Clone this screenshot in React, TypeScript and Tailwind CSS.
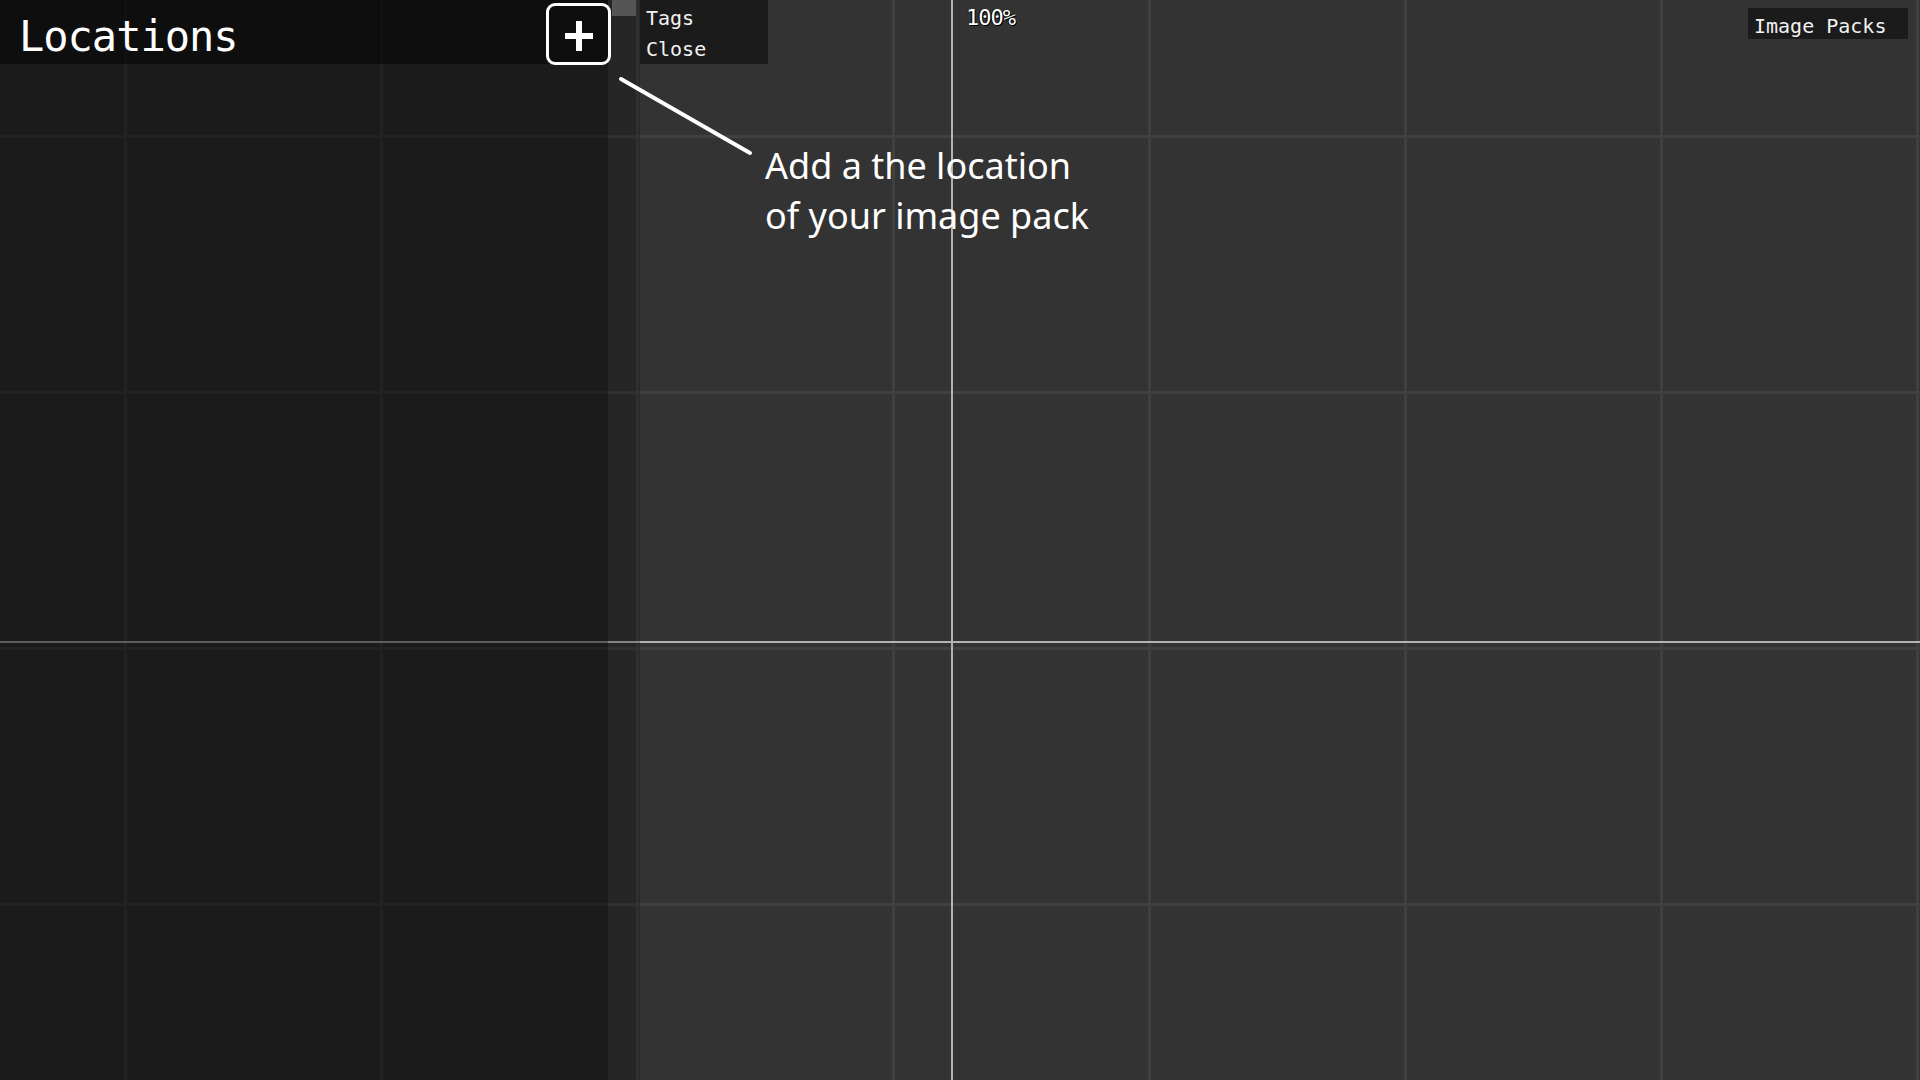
export default function App() {
  const menuItems = ["Tags", "Close"];

  return (
    <div className="relative flex h-[1080px] w-[1920px] overflow-hidden bg-[#333333] [background-image:linear-gradient(to_right,transparent_951px,#b2b2b2_951px,#b2b2b2_953px,transparent_953px),linear-gradient(to_bottom,transparent_641px,#b2b2b2_641px,#b2b2b2_643px,transparent_643px),linear-gradient(to_right,#404040_3px,transparent_3px),linear-gradient(to_bottom,#404040_3px,transparent_3px)] [background-size:100%_100%,100%_100%,256px_256px,256px_256px] [background-position:0_0,0_0,124px_135px,124px_135px] [background-repeat:no-repeat,no-repeat,repeat,repeat]">
      {/* locations panel */}
      <aside className="flex w-[608px] flex-col bg-black/[0.47]">
        <header className="flex h-[64px] items-start bg-black/[0.48]">
          <h1 className="mt-[16px] pl-[19px] font-['DejaVu_Sans_Mono',monospace] text-[42px] leading-[42px] tracking-[-1px] text-white">
            Locations
          </h1>
          <button className="relative z-10 -mr-[3px] ml-auto mt-[3px] flex h-[62px] w-[65px] items-center justify-center rounded-[9px] border-[3px] border-white bg-[#0e0e0e] pt-[4px]">
            <svg width="28" height="30" viewBox="0 0 28 30" fill="#ffffff">
              <rect x="0" y="12" width="28" height="6" />
              <rect x="11" y="0" width="6" height="30" />
            </svg>
          </button>
        </header>
      </aside>

      {/* scroll strip */}
      <div className="w-[32px] bg-black/25">
        <div className="ml-[4px] h-[16px] w-[24px] bg-[#555555]" />
      </div>

      {/* canvas */}
      <main className="relative flex-1">
        <ul className="flex h-[64px] w-[128px] flex-col bg-[#1b1b1b] pt-[3px] font-['DejaVu_Sans_Mono',monospace] text-[20px] text-[#f2f2f2]">
          {menuItems.map((item) => (
            <li key={item} className="h-[31px] pl-[6px] leading-[31px]">
              {item}
            </li>
          ))}
        </ul>

        <span className="absolute left-[326px] top-[7px] font-['DejaVu_Sans_Mono',monospace] text-[22px] leading-[22px] tracking-[-1px] text-white [text-shadow:1px_1px_0_#000,-1px_0_0_#000]">
          100%
        </span>

        <button className="absolute right-[12px] top-[8px] h-[31px] w-[160px] bg-[#1b1b1b] pl-[6px] pt-[4px] text-left font-['DejaVu_Sans_Mono',monospace] text-[20px] leading-[28px] text-[#f2f2f2]">
          Image Packs
        </button>
      </main>

      {/* tutorial callout */}
      <svg
        className="pointer-events-none absolute left-0 top-0"
        width="800"
        height="200"
        viewBox="0 0 800 200"
      >
        <line x1="621" y1="79" x2="750" y2="153" stroke="#ffffff" strokeWidth="4" strokeLinecap="round" />
      </svg>
      <p className="absolute left-[765px] top-[141px] font-['Noto_Sans',sans-serif] text-[36px] leading-[50px] text-white">
        Add a the location
        <br />
        of your image pack
      </p>
    </div>
  );
}
